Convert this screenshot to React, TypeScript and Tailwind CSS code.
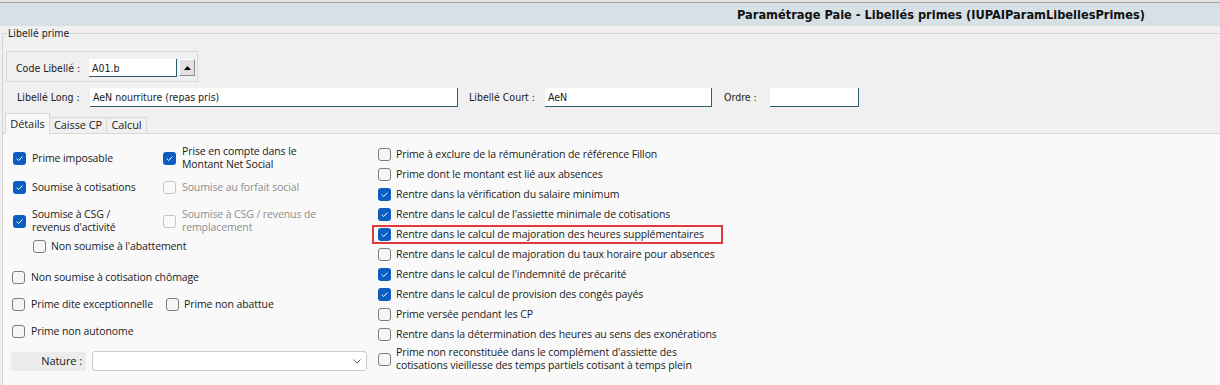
import React from 'react';

// --- CHECKBOX (Windows 11 style) ---
function Check({ on, off }: { on?: boolean; off?: boolean }) {
  if (on)
    return (
      <span className="flex h-[13px] w-[13px] shrink-0 items-center justify-center rounded-[3px] bg-[#0b5dc1]">
        <svg width="9" height="9" viewBox="0 0 9 9" fill="none">
          <path d="M1.7 4.6 3.7 6.5 7.4 2.6" stroke="#fff" strokeWidth="1" />
        </svg>
      </span>
    );
  return (
    <span
      className={`h-[13px] w-[13px] shrink-0 rounded-[3px] border ${
        off ? 'border-[#c6c6c6] bg-[#fafafa]' : 'border-[#7c7c7c] bg-[#f6f6f6]'
      }`}
    />
  );
}

type ItemProps = { on?: boolean; off?: boolean; gap?: string; className?: string; children: React.ReactNode };

function Item({ on, off, gap = 'gap-[6px]', className = '', children }: ItemProps) {
  return (
    <div className={`flex items-center ${gap} ${className}`}>
      <Check on={on} off={off} />
      <span className={`whitespace-nowrap leading-[13px] ${off ? 'text-[#8e8e8e]' : ''}`}>{children}</span>
    </div>
  );
}

function Field({ w, children }: { w: string; children?: React.ReactNode }) {
  return (
    <div className={`h-[19px] ${w} border-b border-r border-[#2c5e70] bg-white pl-[3px] leading-[19px]`}>
      {children}
    </div>
  );
}

const rightItems = [
  { t: 'Prime à exclure de la rémunération de référence Fillon', on: false },
  { t: 'Prime dont le montant est lié aux absences', on: false },
  { t: 'Rentre dans la vérification du salaire minimum', on: true },
  { t: "Rentre dans le calcul de l'assiette minimale de cotisations", on: true },
  { t: 'Rentre dans le calcul de majoration des heures supplémentaires', on: true, mark: true },
  { t: 'Rentre dans le calcul de majoration du taux horaire pour absences', on: false },
  { t: "Rentre dans le calcul de l'indemnité de précarité", on: true },
  { t: 'Rentre dans le calcul de provision des congés payés', on: true },
  { t: 'Prime versée pendant les CP', on: false },
  { t: 'Rentre dans la détermination des heures au sens des exonérations', on: false },
];

export default function App() {
  return (
    <div className="h-[385px] w-[1220px] overflow-hidden bg-[#f0f0f0] font-['Open_Sans',sans-serif] text-[10.5px] tracking-[-0.1px] text-[#1b1b1b]">
      {/* Title bar */}
      <div className="h-[2px] bg-[#e4e4e4]" />
      <div className="h-[1px] bg-[#a3a3a3]" />
      <div className="flex h-[23px] items-center justify-end bg-[#d7e1e5] pr-[75px] font-['DejaVu_Sans_Condensed',sans-serif] text-[12.7px] font-bold tracking-normal text-[#111]">
        Paramétrage Paie - Libellés primes (IUPAIParamLibellesPrimes)
      </div>

      {/* Fieldset Libellé prime */}
      <div className="ml-[2px] mt-[7px] border-l border-t border-[#d3d3d3]">
        <div className="-mt-[8px] ml-[4px] w-fit bg-[#f0f0f0] px-[1px] font-['DejaVu_Sans_Condensed',sans-serif] text-[10.5px] leading-[14px] tracking-normal">
          Libellé prime
        </div>

        <div className="ml-[3px] mt-[11px] flex h-[31px] w-[192px] items-start border border-[#d9d9d9] pl-[9px] pt-[7px] font-['DejaVu_Sans_Condensed',sans-serif] tracking-normal">
          <span className="w-[73px] leading-[18px]">Code Libellé :</span>
          <div className="h-[18px] w-[88px] border-b border-r border-[#2c5e70] bg-white pl-[3px] leading-[18px]">A01.b</div>
          <div className="ml-[2px] flex h-[17px] w-[16px] items-center justify-center border border-b-[#8c8c8c] border-l-white border-r-[#8c8c8c] border-t-white bg-[#e1e1e1]">
            <svg width="7" height="4" viewBox="0 0 7 4">
              <path d="M0 4 3.5 0 7 4z" fill="#000" />
            </svg>
          </div>
        </div>

        <div className="ml-[14px] mt-[6px] flex h-[19px] items-center font-['DejaVu_Sans_Condensed',sans-serif] tracking-normal">
          <span className="w-[73px]">Libellé Long :</span>
          <Field w="w-[368px]">AeN nourriture (repas pris)</Field>
          <span className="ml-[11px] w-[76px]">Libellé Court :</span>
          <Field w="w-[167px]">AeN</Field>
          <span className="ml-[12px] w-[46px]">Ordre :</span>
          <Field w="w-[89px]" />
        </div>

        {/* Tabs */}
        <div className="relative z-10 -mb-px ml-[2px] mt-[6px] flex h-[21px] items-end text-[11px]">
          <div className="flex h-[21px] w-[45px] items-center justify-center border-x border-t border-[#d9d9d9] bg-[#f9f9f9]">
            Détails
          </div>
          <div className="flex h-[17px] w-[57px] items-center justify-center border-b border-r border-t border-[#d9d9d9] bg-[#f0f0f0]">
            Caisse CP
          </div>
          <div className="flex h-[17px] w-[40px] items-center justify-center border-b border-r border-t border-[#d9d9d9] bg-[#f0f0f0]">
            Calcul
          </div>
        </div>

        {/* Panel */}
        <div className="flex h-[300px] border-t border-[#d9d9d9] bg-[#f9f9f9]">
          {/* Left column */}
          <div className="flex w-[369px] flex-col pl-[9px]">
            <div className="ml-[1px] mt-[11px] flex h-[26px] items-center">
              <Item on className="w-[150px]">Prime imposable</Item>
              <Item on>
                Prise en compte dans le
                <br />
                Montant Net Social
              </Item>
            </div>
            <div className="ml-[1px] mt-[6px] flex h-[20px] items-center">
              <Item on className="w-[150px]">Soumise à cotisations</Item>
              <Item off>Soumise au forfait social</Item>
            </div>
            <div className="ml-[1px] mt-[11px] flex h-[26px] items-center">
              <Item on className="w-[150px]">
                Soumise à CSG /
                <br />
                revenus d'activité
              </Item>
              <Item off>
                Soumise à CSG / revenus de
                <br />
                remplacement
              </Item>
            </div>
            <div className="ml-[21px] mt-[5px] flex h-[14px] items-center">
              <Item gap="gap-[5px]">Non soumise à l'abattement</Item>
            </div>
            <div className="mt-[17px] flex h-[14px] items-center">
              <Item>Non soumise à cotisation chômage</Item>
            </div>
            <div className="mt-[13px] flex h-[14px] items-center">
              <Item className="w-[154px]">Prime dite exceptionnelle</Item>
              <Item gap="gap-[5px]">Prime non abattue</Item>
            </div>
            <div className="mt-[13px] flex h-[14px] items-center">
              <Item>Prime non autonome</Item>
            </div>
            <div className="mt-[13px] flex h-[20px] items-center">
              <div className="-ml-px flex h-[19px] w-[75px] items-center justify-end bg-[#ececec] pr-[4px] text-[11px]">Nature :</div>
              <div className="ml-[6px] flex h-[20px] w-[275px] items-center justify-end rounded-[3px] border border-[#cacaca] bg-white pr-[5px]">
                <svg width="8" height="5" viewBox="0 0 8 5" fill="none">
                  <path d="M0.5 0.5 4 4 7.5 0.5" stroke="#606060" strokeWidth="1" />
                </svg>
              </div>
            </div>
          </div>

          {/* Right column */}
          <div className="flex flex-col pl-[6px] pt-[10px]">
            {rightItems.map((it, i) => (
              <div key={i} className="flex h-[20px] items-center">
                {it.mark ? (
                  <div className="-ml-[6px] flex h-[19px] w-[351px] items-center border-2 border-[#e0393e] pl-[4px]">
                    <Item on={it.on} gap="gap-[5px]">{it.t}</Item>
                  </div>
                ) : (
                  <Item on={it.on} gap="gap-[5px]">{it.t}</Item>
                )}
              </div>
            ))}
            <div className="mt-[2px] flex h-[26px] items-center">
              <Item gap="gap-[5px]">
                Prime non reconstituée dans le complément d'assiette des
                <br />
                cotisations vieillesse des temps partiels cotisant à temps plein
              </Item>
            </div>
          </div>
        </div>
      </div>
    </div>
  );
}
